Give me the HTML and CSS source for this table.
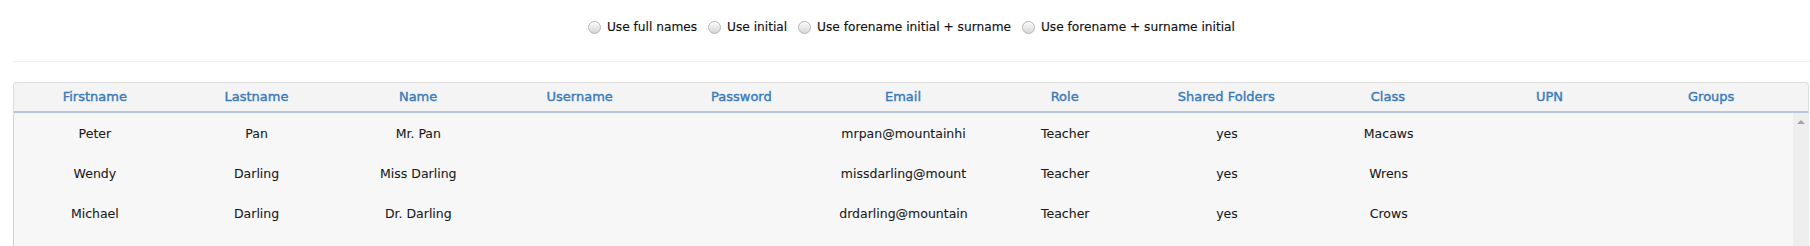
FILE: index.html
```html
<!DOCTYPE html>
<html lang="en">
<head>
  <meta charset="UTF-8" />
  <title>User import</title>
  <link rel="stylesheet" href="styles.css">
</head>
<body>

  <!-- Name format options -->
  <div class="name-format">
    <label class="option"><input type="radio" name="nameFormat" value="full"> Use full names</label>
    <label class="option"><input type="radio" name="nameFormat" value="initial"> Use initial</label>
    <label class="option"><input type="radio" name="nameFormat" value="foreInitial"> Use forename initial + surname</label>
    <label class="option"><input type="radio" name="nameFormat" value="surInitial"> Use forename + surname initial</label>
  </div>

  <hr class="divider">

  <!-- Users grid -->
  <div class="users-grid">
    <div class="grid-head">
      <div class="cell">Firstname</div>
      <div class="cell">Lastname</div>
      <div class="cell">Name</div>
      <div class="cell">Username</div>
      <div class="cell">Password</div>
      <div class="cell">Email</div>
      <div class="cell">Role</div>
      <div class="cell">Shared Folders</div>
      <div class="cell">Class</div>
      <div class="cell">UPN</div>
      <div class="cell">Groups</div>
    </div>

    <div class="grid-body">
      <div class="grid-rows">
        <div class="row">
          <div class="cell">Peter</div>
          <div class="cell">Pan</div>
          <div class="cell">Mr. Pan</div>
          <div class="cell"></div>
          <div class="cell"></div>
          <div class="cell">mrpan@mountainhi</div>
          <div class="cell">Teacher</div>
          <div class="cell">yes</div>
          <div class="cell">Macaws</div>
          <div class="cell"></div>
          <div class="cell"></div>
        </div>
        <div class="row">
          <div class="cell">Wendy</div>
          <div class="cell">Darling</div>
          <div class="cell">Miss Darling</div>
          <div class="cell"></div>
          <div class="cell"></div>
          <div class="cell">missdarling@mount</div>
          <div class="cell">Teacher</div>
          <div class="cell">yes</div>
          <div class="cell">Wrens</div>
          <div class="cell"></div>
          <div class="cell"></div>
        </div>
        <div class="row">
          <div class="cell">Michael</div>
          <div class="cell">Darling</div>
          <div class="cell">Dr. Darling</div>
          <div class="cell"></div>
          <div class="cell"></div>
          <div class="cell">drdarling@mountain</div>
          <div class="cell">Teacher</div>
          <div class="cell">yes</div>
          <div class="cell">Crows</div>
          <div class="cell"></div>
          <div class="cell"></div>
        </div>
      </div>

      <div class="scrollbar">
        <span class="arrow-up"></span>
      </div>
    </div>
  </div>

</body>
</html>
```

FILE: styles.css
```css
    body {
      margin: 0;
      padding: 0;
      background-color: #FFFFFF;
      font-family: 'DejaVu Sans', sans-serif;
      color: #1A1A1A;
    }

    /* radio options on top */
    .name-format {
      display: flex;
      justify-content: center;
      align-items: center;
      height: 54px;
      padding-left: 13px;
      font-size: 12.2px;
      color: #111111;
      -webkit-text-stroke: 0.15px #111111;
    }

    .option {
      display: flex;
      align-items: center;
      margin-right: 11px;
      white-space: pre;
    }

    .option:last-child { margin-right: 0; }

    .option input {
      appearance: none;
      -webkit-appearance: none;
      width: 13px;
      height: 13px;
      margin: 0 2px 0 0;
      border-radius: 50%;
      border: 1px solid #B4B4B4;
      background: linear-gradient(#FBFBFB, #D6D6D6);
      box-shadow: inset 0 1px 1px rgba(255,255,255,0.8);
    }

    .divider {
      border: 0;
      border-top: 1px solid #EEEEEE;
      margin: 7px 0 0 13px;
    }

    /* grid */
    .users-grid {
      margin: 20px 1px 0 13px;
    }

    .grid-head {
      display: grid;
      grid-template-columns: repeat(11, minmax(0, 1fr));
      height: 28px;
      padding-right: 16px;
      background-color: #F4F4F4;
      border: 1px solid #DDDDDD;
      border-bottom: 2px solid #BAC6DA;
      border-radius: 4px 4px 0 0;
      color: #3A7BBA;
      font-size: 13px;
      -webkit-text-stroke: 0.4px #3A7BBA;
    }

    .grid-head .cell {
      line-height: 28px;
    }

    .grid-body {
      display: flex;
      height: 140px;
      background-color: #F7F7F7;
      border-left: 1px solid #C4D1E8;
      border-top-left-radius: 3px;
    }

    .grid-rows {
      flex: 1;
      min-width: 0;
    }

    .row {
      display: grid;
      grid-template-columns: repeat(11, minmax(0, 1fr));
      height: 40px;
      align-items: center;
      font-size: 12.5px;
      -webkit-text-stroke: 0.1px #1A1A1A;
    }

    .cell {
      padding: 0 12px;
      text-align: center;
      white-space: nowrap;
    }

    .scrollbar {
      width: 16px;
      background-color: #EEEEEE;
      display: flex;
      justify-content: center;
      padding-top: 7px;
      box-sizing: border-box;
    }

    .arrow-up {
      width: 0;
      height: 0;
      border-left: 4px solid transparent;
      border-right: 4px solid transparent;
      border-bottom: 4px solid #A3A3A3;
    }
```
